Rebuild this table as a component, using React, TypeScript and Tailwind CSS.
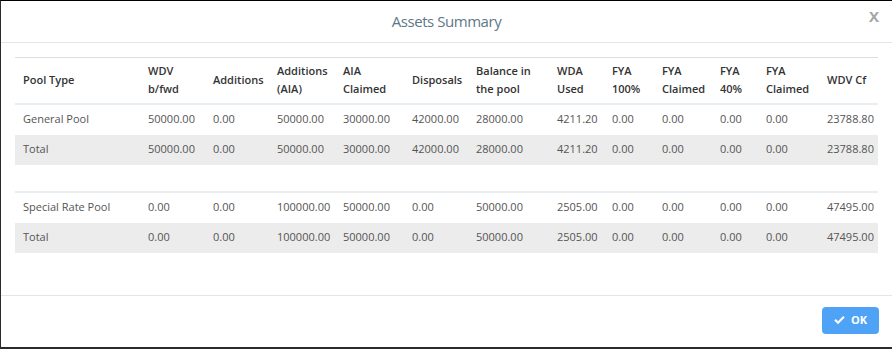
const COLS = [125, 65, 64, 66, 69, 64, 81, 55, 50, 58, 46, 61, 59];

const HEAD: [string, string?][] = [
  ["Pool Type"],
  ["WDV", "b/fwd"],
  ["Additions"],
  ["Additions", "(AIA)"],
  ["AIA", "Claimed"],
  ["Disposals"],
  ["Balance in", "the pool"],
  ["WDA", "Used"],
  ["FYA", "100%"],
  ["FYA", "Claimed"],
  ["FYA", "40%"],
  ["FYA", "Claimed"],
  ["WDV Cf"],
];

const GENERAL = ["50000.00", "0.00", "50000.00", "30000.00", "42000.00", "28000.00", "4211.20", "0.00", "0.00", "0.00", "0.00", "23788.80"];
const SPECIAL = ["0.00", "0.00", "100000.00", "50000.00", "0.00", "50000.00", "2505.00", "0.00", "0.00", "0.00", "0.00", "47495.00"];

function Row({ label, values, total }: { label: string; values: string[]; total?: boolean }) {
  return (
    <tr className={total ? "h-[30px] bg-[#ececec]" : "h-[31px]"}>
      <td className="px-2 align-middle">{label}</td>
      {values.map((v, i) => (
        <td key={i} className="whitespace-nowrap px-2 align-middle">
          {v}
        </td>
      ))}
    </tr>
  );
}

export default function App() {
  return (
    <div
      className="flex h-[349px] w-[892px] flex-col overflow-hidden border-t border-l border-b-2 border-t-black border-l-[#2b2b2b] border-b-[#2b2b2b] bg-white text-[#555]"
      style={{ fontFamily: '"Open Sans", "Noto Sans", sans-serif' }}
    >
      <div className="relative flex h-[42px] shrink-0 items-center justify-center border-b border-[#e5e5e5]">
        <h2 className="text-[15px] font-medium tracking-[-0.03em] text-[#5d7787]">Assets Summary</h2>
        <button className="absolute right-[13px] top-[4px] text-[15px] font-bold text-[#a6a6a6]">X</button>
      </div>

      <div className="flex-1 px-[14px] pt-[14px]">
        <table className="w-[863px] table-fixed border-collapse border-t border-[#dedede] text-[11px]">
          <colgroup>
            {COLS.map((w, i) => (
              <col key={i} style={{ width: w }} />
            ))}
          </colgroup>
          <thead>
            <tr className="h-[46px] border-b-2 border-[#e9eef3]">
              {HEAD.map(([a, b], i) => (
                <th key={i} className="px-2 text-left align-middle font-semibold leading-[18px] text-[#333]">
                  {a}
                  {b && <br />}
                  {b}
                </th>
              ))}
            </tr>
          </thead>
          <tbody>
            <Row label="General Pool" values={GENERAL} />
            <Row label="Total" values={GENERAL} total />
            <tr className="h-[27px] border-b-2 border-[#e9eef3]">
              <td colSpan={13} />
            </tr>
            <Row label="Special Rate Pool" values={SPECIAL} />
            <Row label="Total" values={SPECIAL} total />
          </tbody>
        </table>
      </div>

      <div className="flex h-[52px] shrink-0 items-start justify-end border-t border-[#e5e5e5] pr-[13px] pt-[11px]">
        <button className="flex h-[27px] w-[57px] items-center justify-center gap-[6px] rounded-[4px] bg-[#4fa3f7] text-[11px] font-bold text-white">
          <svg width="11" height="9" viewBox="0 0 11 9" fill="white">
            <path d="M0.3 4.6 L1.8 3.1 L4 5.3 L9.2 0.1 L10.7 1.6 L4 8.3 Z" />
          </svg>
          OK
        </button>
      </div>
    </div>
  );
}
